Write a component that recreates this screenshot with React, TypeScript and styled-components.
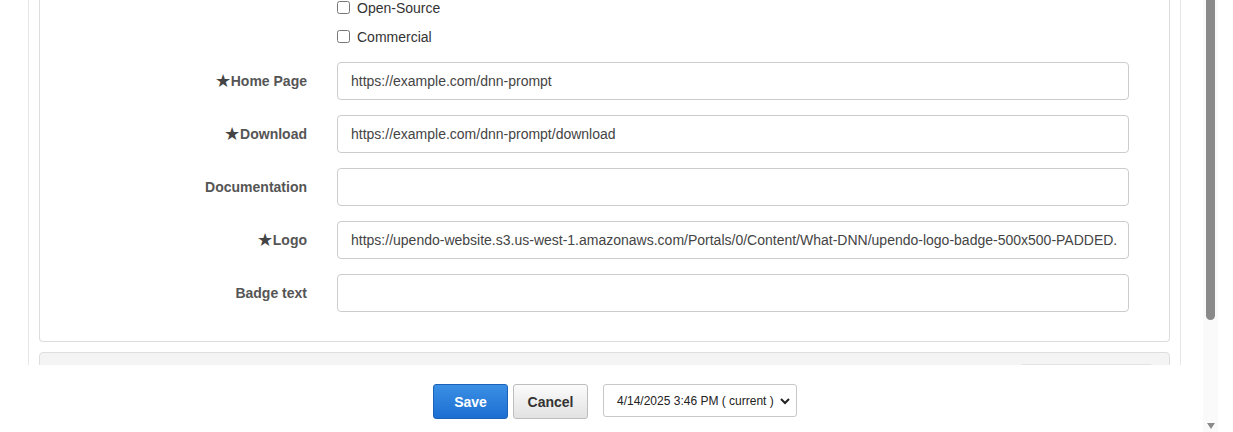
import React from 'react';
import styled, { createGlobalStyle } from 'styled-components';

const GlobalStyle = createGlobalStyle`
  html, body {
    margin: 0;
    padding: 0;
    background: #ffffff;
    font-family: "Liberation Sans", Arial, sans-serif;
    overflow: hidden;
  }
`;

const Screen = styled.div`
  display: flex;
  width: 1233px;
  height: 432px;
  background: #fff;
`;

const Main = styled.div`
  display: flex;
  flex-direction: column;
  width: 1203px;
  height: 432px;
`;

const Viewport = styled.div`
  height: 365px;
  overflow: hidden;
  padding-left: 28px;
`;

const OuterBox = styled.div`
  width: 1131px;
  padding: 0 10px 20px;
  border-left: 1px solid #e6e6e6;
  border-right: 1px solid #e6e6e6;
`;

const Panel = styled.div`
  border: 1px solid #dcdcdc;
  border-top: none;
  border-radius: 0 0 4px 4px;
  padding: 0 40px 29px 0;
  background: #fff;
`;

const CheckList = styled.div`
  margin-top: -7px;
  padding-left: 297px;
`;

const CheckRow = styled.label`
  display: flex;
  align-items: center;
  gap: 7px;
  height: 29px;
  font-size: 14px;
  color: #333;
`;

const Box = styled.input`
  width: 13px;
  height: 13px;
  margin: 0;
`;

const Fields = styled.div`
  display: flex;
  flex-direction: column;
  gap: 15px;
  margin-top: 11px;
`;

const Row = styled.div`
  display: grid;
  grid-template-columns: 267px 1fr;
  column-gap: 30px;
  align-items: center;
`;

const Label = styled.div`
  display: flex;
  justify-content: flex-end;
  align-items: center;
  font-size: 14px;
  font-weight: bold;
  color: #555;
`;

const Star = styled.span`
  font-weight: normal;
  font-size: 18px;
  line-height: 14px;
  color: #444;
`;

const TextBox = styled.div`
  height: 36px;
  border: 1px solid #cccccc;
  border-radius: 4px;
  padding: 0 13px;
  display: flex;
  align-items: center;
  font-size: 14px;
  color: #444;
  white-space: nowrap;
  overflow: hidden;
`;

const NextPanel = styled.div`
  margin-top: 10px;
  height: 60px;
  background: #f4f4f4;
  border: 1px solid #dedede;
  border-radius: 4px 4px 0 0;
  display: flex;
  justify-content: flex-end;
  padding: 11px 16px 0 0;
  box-sizing: border-box;
`;

const SegGroup = styled.div`
  display: flex;
  height: 30px;
  background: #fff;
  border: 1px solid #e2e2e2;
  border-radius: 3px;
`;

const Seg = styled.div`
  width: 32px;
  & + & {
    border-left: 1px solid #e2e2e2;
  }
`;

const Footer = styled.div`
  height: 67px;
  background: #fff;
  display: flex;
  align-items: flex-start;
  justify-content: center;
  padding: 19px 0 0 27px;
  box-sizing: border-box;
  gap: 5px;
`;

const Button = styled.button<{ $primary?: boolean }>`
  flex-shrink: 0;
  height: 35px;
  width: 75px;
  border-radius: 3px;
  font-family: "Liberation Sans", Arial, sans-serif;
  font-size: 14px;
  font-weight: bold;
  cursor: pointer;
  color: ${(p) => (p.$primary ? '#ffffff' : '#333333')};
  border: 1px solid ${(p) => (p.$primary ? '#1b63b8' : '#bdbdbd')};
  background: ${(p) =>
    p.$primary
      ? 'linear-gradient(#3b8fe4, #1c6fd2)'
      : 'linear-gradient(#fbfbfb, #e2e2e2)'};
`;

const Select = styled.div`
  flex-shrink: 0;
  margin-left: 10px;
  width: 194px;
  height: 33px;
  border: 1px solid #c8c8c8;
  border-radius: 3px;
  display: flex;
  align-items: center;
  justify-content: space-between;
  padding: 0 6px 0 13px;
  box-sizing: border-box;
  font-size: 12px;
  color: #222;
  white-space: nowrap;
`;

const ScrollTrack = styled.div`
  width: 15px;
  height: 432px;
  background: #fafafa;
  display: flex;
  flex-direction: column;
  align-items: center;
  justify-content: space-between;
`;

const Thumb = styled.div`
  width: 9px;
  height: 320px;
  background: #8a8a8a;
  border-radius: 0 0 5px 5px;
`;

const ArrowDown = styled.div`
  width: 0;
  height: 0;
  border-left: 4px solid transparent;
  border-right: 4px solid transparent;
  border-top: 6px solid #8a8a8a;
  margin-bottom: 3px;
`;

const fields = [
  { label: 'Home Page', required: true, value: 'https://example.com/dnn-prompt' },
  { label: 'Download', required: true, value: 'https://example.com/dnn-prompt/download' },
  { label: 'Documentation', required: false, value: '' },
  {
    label: 'Logo',
    required: true,
    value:
      'https://upendo-website.s3.us-west-1.amazonaws.com/Portals/0/Content/What-DNN/upendo-logo-badge-500x500-PADDED.',
  },
  { label: 'Badge text', required: false, value: '' },
];

export default function App() {
  return (
    <>
      <GlobalStyle />
      <Screen>
        <Main>
          <Viewport>
            <OuterBox>
              <Panel>
                <CheckList>
                  <CheckRow>
                    <Box type="checkbox" />
                    Open-Source
                  </CheckRow>
                  <CheckRow>
                    <Box type="checkbox" />
                    Commercial
                  </CheckRow>
                </CheckList>
                <Fields>
                  {fields.map((f) => (
                    <Row key={f.label}>
                      <Label>
                        {f.required && <Star>★</Star>}
                        {f.label}
                      </Label>
                      <TextBox>{f.value}</TextBox>
                    </Row>
                  ))}
                </Fields>
              </Panel>
              <NextPanel>
                <SegGroup>
                  <Seg />
                  <Seg />
                  <Seg />
                  <Seg />
                </SegGroup>
              </NextPanel>
            </OuterBox>
          </Viewport>
          <Footer>
            <Button $primary>Save</Button>
            <Button>Cancel</Button>
            <Select>
              <span>4/14/2025 3:46 PM ( current )</span>
              <svg width="10" height="8" viewBox="0 0 10 8">
                <path d="M1 2 L5 6 L9 2" fill="none" stroke="#222" strokeWidth="2" />
              </svg>
            </Select>
          </Footer>
        </Main>
        <ScrollTrack>
          <Thumb />
          <ArrowDown />
        </ScrollTrack>
      </Screen>
    </>
  );
}
